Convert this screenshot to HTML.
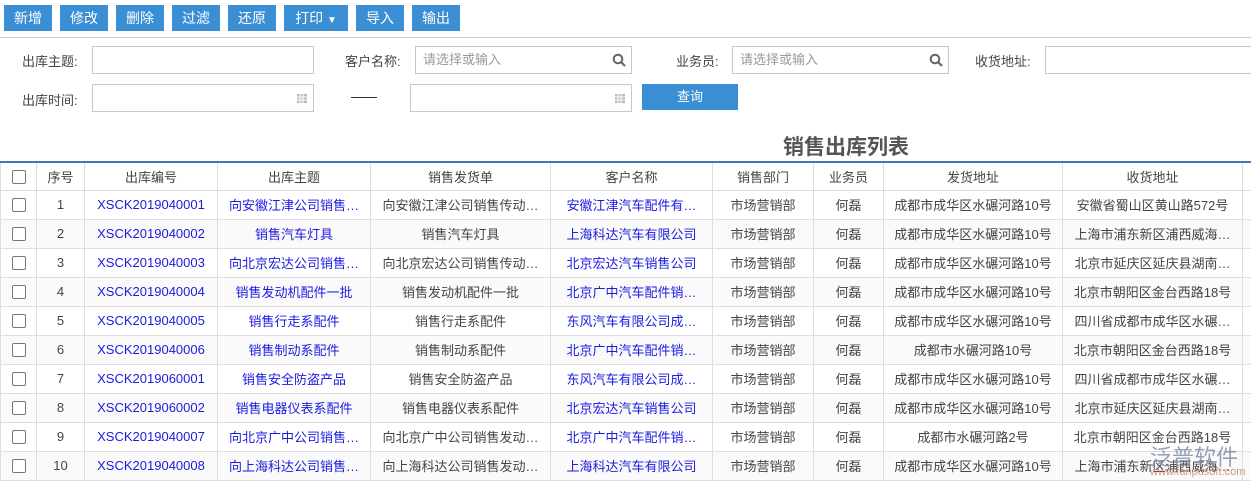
<!DOCTYPE html><html><head><meta charset="utf-8"><style>
*{margin:0;padding:0;box-sizing:border-box}
body{width:1251px;height:488px;overflow:hidden;background:#fff;font-family:"Liberation Sans","Noto Sans CJK SC",sans-serif;font-size:13px;color:#333;position:relative}
.btn{position:absolute;top:5px;height:26px;background:#3a8fd4;color:#fff;font-size:14px;text-align:center;line-height:26px}
.hr{position:absolute;top:37px;left:0;width:1251px;height:1px;background:#ccc}
.lbl{position:absolute;font-size:13px;color:#444}
.inp{position:absolute;height:28px;border:1px solid #c8c8c8;background:#fff;color:#999;font-size:13px;line-height:26px;padding-left:7px}
.ico{position:absolute;right:5px;top:6px}
.title{position:absolute;left:783px;top:131px;font-size:21px;font-weight:bold;color:#555}
table{position:absolute;left:0;top:161px;width:1262px;border-collapse:collapse;table-layout:fixed;border-top:2px solid #3d7ab5;border-left:1px solid #3d7ab5}
td,th{height:29px;border:1px solid #ddd;text-align:center;font-weight:normal;white-space:nowrap;overflow:hidden;font-size:13px;color:#444}
th{height:28px}
tr:nth-child(odd) td{background:#fafafa}
.b{color:#1b1be0}
.cb{display:inline-block;width:14px;height:14px;border:1px solid #777;border-radius:2px;vertical-align:middle;background:#fff}
</style></head><body>
<div class="btn" style="left:4px;width:48px">新增</div>
<div class="btn" style="left:60px;width:48px">修改</div>
<div class="btn" style="left:116px;width:48px">删除</div>
<div class="btn" style="left:172px;width:48px">过滤</div>
<div class="btn" style="left:228px;width:48px">还原</div>
<div class="btn" style="left:284px;width:64px">打印 <span style="font-size:10px">▼</span></div>
<div class="btn" style="left:356px;width:48px">导入</div>
<div class="btn" style="left:412px;width:48px">输出</div>
<div class="hr"></div>
<div class="lbl" style="left:22px;top:51px">出库主题:</div>
<div class="inp" style="left:92px;top:46px;width:222px"></div>
<div class="lbl" style="left:345px;top:51px">客户名称:</div>
<div class="inp" style="left:415px;top:46px;width:217px">请选择或输入<svg class="ico" width="14" height="14" viewBox="0 0 14 14"><circle cx="6" cy="6" r="4.3" fill="none" stroke="#666" stroke-width="2"/><path d="M9 9l4 4" stroke="#666" stroke-width="2.2"/></svg></div>
<div class="lbl" style="left:676px;top:51px">业务员:</div>
<div class="inp" style="left:732px;top:46px;width:217px">请选择或输入<svg class="ico" width="14" height="14" viewBox="0 0 14 14"><circle cx="6" cy="6" r="4.3" fill="none" stroke="#666" stroke-width="2"/><path d="M9 9l4 4" stroke="#666" stroke-width="2.2"/></svg></div>
<div class="lbl" style="left:975px;top:51px">收货地址:</div>
<div class="inp" style="left:1045px;top:46px;width:220px"></div>
<div class="lbl" style="left:22px;top:90px">出库时间:</div>
<div class="inp" style="left:92px;top:84px;width:222px"><svg class="ico" style="top:7px" width="12" height="12" viewBox="0 0 12 12"><rect x="1" y="2" width="10" height="9" fill="#bbb"/><path d="M1 5h10M1 8h10M4 2v9M7 2v9" stroke="#fff"/></svg></div>
<div style="position:absolute;left:351px;top:97px;width:26px;height:1px;background:#333"></div>
<div class="inp" style="left:410px;top:84px;width:222px"><svg class="ico" style="top:7px" width="12" height="12" viewBox="0 0 12 12"><rect x="1" y="2" width="10" height="9" fill="#bbb"/><path d="M1 5h10M1 8h10M4 2v9M7 2v9" stroke="#fff"/></svg></div>
<div class="btn" style="left:642px;top:84px;width:96px;height:26px;line-height:26px;font-size:13px">查询</div>
<div class="title">销售出库列表</div>
<table>
<colgroup><col style="width:36px"><col style="width:48px"><col style="width:133px"><col style="width:153px"><col style="width:180px"><col style="width:162px"><col style="width:101px"><col style="width:70px"><col style="width:179px"><col style="width:180px"><col style="width:20px"></colgroup>
<tr><th><span class="cb"></span></th><th>序号</th><th>出库编号</th><th>出库主题</th><th>销售发货单</th><th>客户名称</th><th>销售部门</th><th>业务员</th><th>发货地址</th><th>收货地址</th><th></th></tr>
<tr><td><span class="cb"></span></td><td>1</td><td class="b">XSCK2019040001</td><td class="b">向安徽江津公司销售…</td><td>向安徽江津公司销售传动…</td><td class="b">安徽江津汽车配件有…</td><td>市场营销部</td><td>何磊</td><td>成都市成华区水碾河路10号</td><td>安徽省蜀山区黄山路572号</td><td></td></tr>
<tr><td><span class="cb"></span></td><td>2</td><td class="b">XSCK2019040002</td><td class="b">销售汽车灯具</td><td>销售汽车灯具</td><td class="b">上海科达汽车有限公司</td><td>市场营销部</td><td>何磊</td><td>成都市成华区水碾河路10号</td><td>上海市浦东新区浦西威海…</td><td></td></tr>
<tr><td><span class="cb"></span></td><td>3</td><td class="b">XSCK2019040003</td><td class="b">向北京宏达公司销售…</td><td>向北京宏达公司销售传动…</td><td class="b">北京宏达汽车销售公司</td><td>市场营销部</td><td>何磊</td><td>成都市成华区水碾河路10号</td><td>北京市延庆区延庆县湖南…</td><td></td></tr>
<tr><td><span class="cb"></span></td><td>4</td><td class="b">XSCK2019040004</td><td class="b">销售发动机配件一批</td><td>销售发动机配件一批</td><td class="b">北京广中汽车配件销…</td><td>市场营销部</td><td>何磊</td><td>成都市成华区水碾河路10号</td><td>北京市朝阳区金台西路18号</td><td></td></tr>
<tr><td><span class="cb"></span></td><td>5</td><td class="b">XSCK2019040005</td><td class="b">销售行走系配件</td><td>销售行走系配件</td><td class="b">东风汽车有限公司成…</td><td>市场营销部</td><td>何磊</td><td>成都市成华区水碾河路10号</td><td>四川省成都市成华区水碾…</td><td></td></tr>
<tr><td><span class="cb"></span></td><td>6</td><td class="b">XSCK2019040006</td><td class="b">销售制动系配件</td><td>销售制动系配件</td><td class="b">北京广中汽车配件销…</td><td>市场营销部</td><td>何磊</td><td>成都市水碾河路10号</td><td>北京市朝阳区金台西路18号</td><td></td></tr>
<tr><td><span class="cb"></span></td><td>7</td><td class="b">XSCK2019060001</td><td class="b">销售安全防盗产品</td><td>销售安全防盗产品</td><td class="b">东风汽车有限公司成…</td><td>市场营销部</td><td>何磊</td><td>成都市成华区水碾河路10号</td><td>四川省成都市成华区水碾…</td><td></td></tr>
<tr><td><span class="cb"></span></td><td>8</td><td class="b">XSCK2019060002</td><td class="b">销售电器仪表系配件</td><td>销售电器仪表系配件</td><td class="b">北京宏达汽车销售公司</td><td>市场营销部</td><td>何磊</td><td>成都市成华区水碾河路10号</td><td>北京市延庆区延庆县湖南…</td><td></td></tr>
<tr><td><span class="cb"></span></td><td>9</td><td class="b">XSCK2019040007</td><td class="b">向北京广中公司销售…</td><td>向北京广中公司销售发动…</td><td class="b">北京广中汽车配件销…</td><td>市场营销部</td><td>何磊</td><td>成都市水碾河路2号</td><td>北京市朝阳区金台西路18号</td><td></td></tr>
<tr><td><span class="cb"></span></td><td>10</td><td class="b">XSCK2019040008</td><td class="b">向上海科达公司销售…</td><td>向上海科达公司销售发动…</td><td class="b">上海科达汽车有限公司</td><td>市场营销部</td><td>何磊</td><td>成都市成华区水碾河路10号</td><td>上海市浦东新区浦西威海…</td><td></td></tr>
</table>
<div style="position:absolute;left:1150px;top:440px;font-size:22px;color:#7a8aa8;opacity:.8;white-space:nowrap">泛普软件</div>
<div style="position:absolute;left:1150px;top:466px;font-size:11px;color:#c88060;opacity:.8;white-space:nowrap">www.fanpusoft.com</div>
</body></html>
